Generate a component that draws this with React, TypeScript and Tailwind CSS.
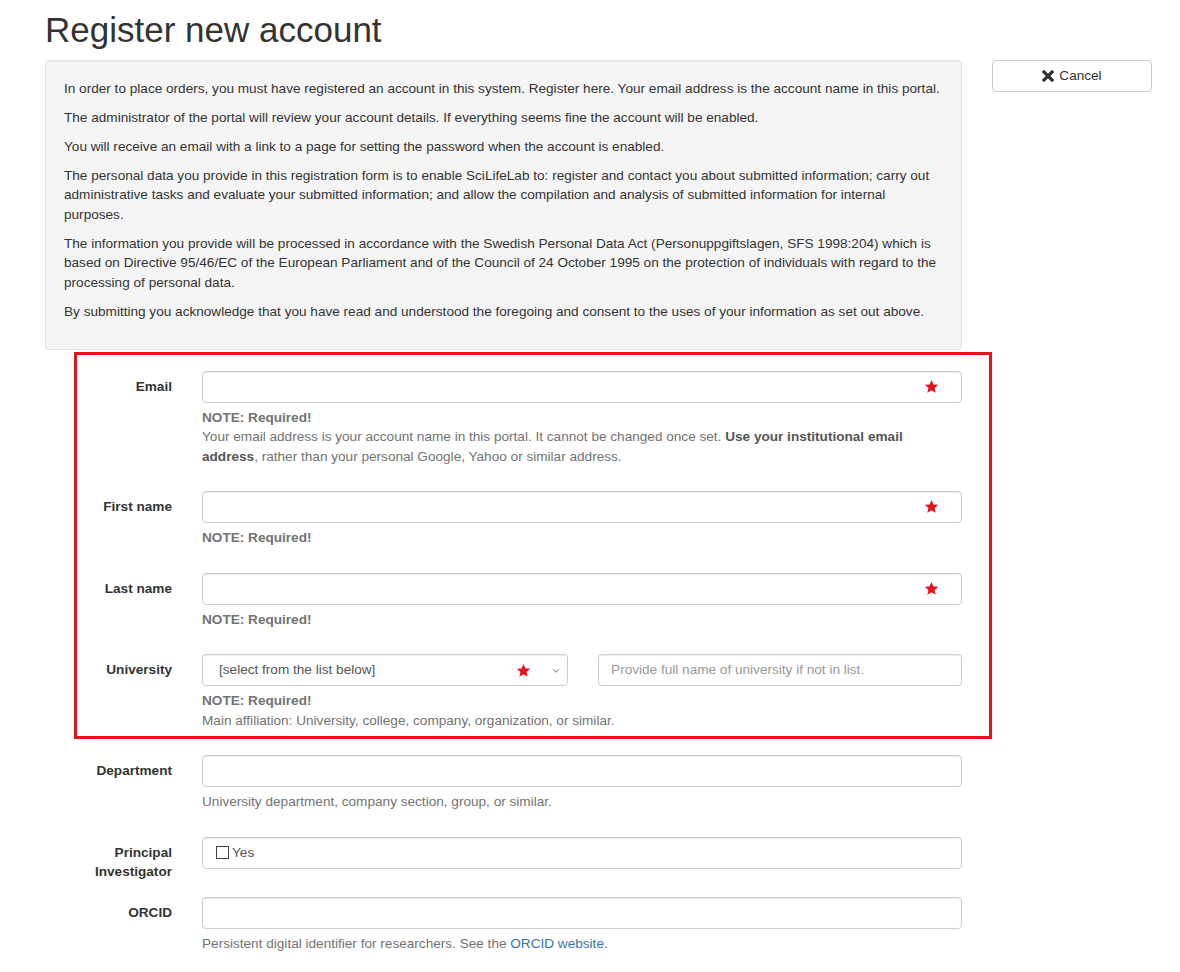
import React from 'react';
import { ChevronDown } from 'lucide-react';

const Star = () => (
  <svg width="15" height="15" viewBox="0 0 24 24" className="block">
    <polygon
      points="12,1.5 15.1,8.6 22.8,9.2 16.9,14.2 18.7,21.8 12,17.8 5.3,21.8 7.1,14.2 1.2,9.2 8.9,8.6"
      fill="#e8101a"
    />
  </svg>
);

const RemoveIcon = () => (
  <svg width="12" height="12" viewBox="0 0 12 12" className="block">
    <path d="M2 2 L10 10 M10 2 L2 10" stroke="#333" strokeWidth="3.2" strokeLinecap="square" />
  </svg>
);

const inputCls =
  'h-[32px] w-full rounded-[4px] border border-[#ccc] bg-white shadow-[inset_0_1px_1px_rgba(0,0,0,0.075)]';

interface RowProps {
  label: React.ReactNode;
  children: React.ReactNode;
  help?: React.ReactNode;
}

const Row: React.FC<RowProps> = ({ label, children, help }) => (
  <div className="flex mb-[15px]">
    <label className="w-[127px] shrink-0 text-right font-bold text-[#333] pt-[6px]">{label}</label>
    <div className="ml-[30px] w-[760px]">
      {children}
      {help && <div className="mt-[5px] mb-[10px] text-[#737373]">{help}</div>}
    </div>
  </div>
);

const RequiredInput = () => (
  <div className="relative">
    <div className={inputCls} />
    <span className="absolute right-[23px] top-[8px]">
      <Star />
    </span>
  </div>
);

const Note = () => <div className="font-bold">NOTE: Required!</div>;

export default function App() {
  return (
    <div
      className="min-h-screen bg-white pl-[45px] text-[13.6px] leading-[19.5px] text-[#333]"
      style={{ fontFamily: '"Liberation Sans", Arial, sans-serif' }}
    >
      <h1 className="pt-[11px] mb-[10px] text-[35px] leading-[1.1] font-normal text-[#333]">
        Register new account
      </h1>

      <div className="flex items-start gap-[30px]">
        {/* Intro well */}
        <div className="w-[917px] rounded-[4px] border border-[#e3e3e3] bg-[#f5f5f5] py-[18px] pl-[18px] pr-[20px] shadow-[inset_0_1px_1px_rgba(0,0,0,0.05)]">
          <p className="mb-[9.5px]">
            In order to place orders, you must have registered an account in this system. Register here. Your email
            address is the account name in this portal.
          </p>
          <p className="mb-[9.5px]">
            The administrator of the portal will review your account details. If everything seems fine the account will
            be enabled.
          </p>
          <p className="mb-[9.5px]">You will receive an email with a link to a page for setting the password when the account is enabled.</p>
          <p className="mb-[9.5px]">
            The personal data you provide in this registration form is to enable SciLifeLab to: register and contact
            you about submitted information; carry out administrative tasks and evaluate your submitted information; and
            allow the compilation and analysis of submitted information for internal purposes.
          </p>
          <p className="mb-[9.5px]">
            The information you provide will be processed in accordance with the Swedish Personal Data Act
            (Personuppgiftslagen, SFS 1998:204) which is based on Directive 95/46/EC of the European Parliament and of
            the Council of 24 October 1995 on the protection of individuals with regard to the processing of personal
            data.
          </p>
          <p className="mb-[9.5px]">
            By submitting you acknowledge that you have read and understood the foregoing and consent to the uses of
            your information as set out above.
          </p>
        </div>

        {/* Cancel */}
        <button className="flex h-[32px] w-[160px] items-center justify-center gap-[5px] rounded-[4px] border border-[#ccc] bg-white text-[#333]">
          <RemoveIcon />
          <span>Cancel</span>
        </button>
      </div>

      {/* Form */}
      <div className="relative pt-[21px]">
        <Row
          label="Email"
          help={
            <>
              <Note />
              Your email address is your account name in this portal. It cannot be changed once set.{' '}
              <b className="text-[#555]">Use your institutional email address</b>, rather than your personal Google,
              Yahoo or similar address.
            </>
          }
        >
          <RequiredInput />
        </Row>

        <Row label="First name" help={<Note />}>
          <RequiredInput />
        </Row>

        <Row label="Last name" help={<Note />}>
          <RequiredInput />
        </Row>

        <Row
          label="University"
          help={
            <>
              <Note />
              Main affiliation: University, college, company, organization, or similar.
            </>
          }
        >
          <div className="flex gap-[30px]">
            <div className={`${inputCls} relative flex items-center pl-[16px] text-[#555]`}>
              <span>[select from the list below]</span>
              <span className="absolute right-[36px] top-[8px]">
                <Star />
              </span>
              <ChevronDown className="absolute right-[6px] top-[11px] h-[10px] w-[10px] text-[#555]" strokeWidth={2} />
            </div>
            <div className={`${inputCls} flex items-center pl-[12px] text-[#999]`}>
              Provide full name of university if not in list.
            </div>
          </div>
        </Row>

        <Row label="Department" help="University department, company section, group, or similar.">
          <div className={inputCls} />
        </Row>

        <Row label={<>Principal<br />Investigator</>}>
          <div className={`${inputCls} flex items-center pl-[13px]`}>
            <span className="mr-[3px] h-[13px] w-[13px] border border-[#444] bg-white" />
            <span className="text-[#555]">Yes</span>
          </div>
        </Row>

        <Row
          label="ORCID"
          help={
            <>
              Persistent digital identifier for researchers. See the{' '}
              <a className="text-[#3b73af]" href="#">
                ORCID website
              </a>
              .
            </>
          }
        >
          <div className={inputCls} />
        </Row>

        {/* annotation frame */}
        <div className="pointer-events-none absolute left-[29px] top-[2px] h-[387px] w-[918px] border-[3px] border-[#e2151d]" />
      </div>
    </div>
  );
}
